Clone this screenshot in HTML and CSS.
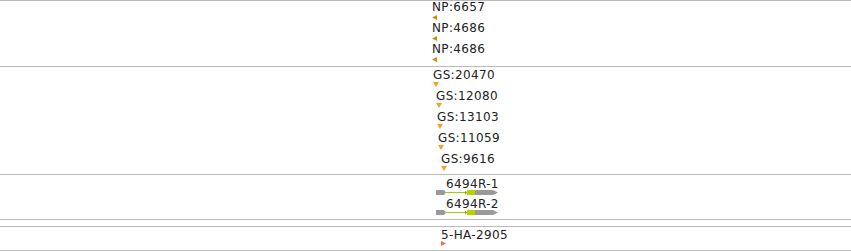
FILE: index.html
```html
<!DOCTYPE html>
<html>
<head>
<title>Tracks</title>
<meta charset="UTF-8">
<link rel="stylesheet" href="styles.css">
</head>
<body>

<!-- NP track -->
<div class="track np">
  <div class="feat" style="margin-left:432px">
    <div class="label">NP:6657</div>
    <svg class="tri" width="5" height="5"><polygon points="0,2.5 5,0 5,5"/></svg>
  </div>
  <div class="feat" style="margin-left:432px">
    <div class="label">NP:4686</div>
    <svg class="tri" width="5" height="5"><polygon points="0,2.5 5,0 5,5"/></svg>
  </div>
  <div class="feat" style="margin-left:432px">
    <div class="label">NP:4686</div>
    <svg class="tri" width="5" height="5"><polygon points="0,2.5 5,0 5,5"/></svg>
  </div>
</div>

<!-- GS track -->
<div class="track gs">
  <div class="feat" style="margin-left:433px">
    <div class="label">GS:20470</div>
    <svg class="tri" width="6" height="5"><polygon points="0,0 6,0 3,5"/></svg>
  </div>
  <div class="feat" style="margin-left:436px">
    <div class="label">GS:12080</div>
    <svg class="tri" width="6" height="5"><polygon points="0,0 6,0 3,5"/></svg>
  </div>
  <div class="feat" style="margin-left:437px">
    <div class="label">GS:13103</div>
    <svg class="tri" width="6" height="5"><polygon points="0,0 6,0 3,5"/></svg>
  </div>
  <div class="feat" style="margin-left:438px">
    <div class="label">GS:11059</div>
    <svg class="tri" width="6" height="5"><polygon points="0,0 6,0 3,5"/></svg>
  </div>
  <div class="feat" style="margin-left:441px">
    <div class="label">GS:9616</div>
    <svg class="tri" width="6" height="5"><polygon points="0,0 6,0 3,5"/></svg>
  </div>
</div>

<!-- gene models -->
<div class="track genes">
  <div class="feat" style="margin-left:436px">
    <div class="label">6494R-1</div>
    <svg class="gene" width="62" height="5">
      <polygon class="utr" points="0,0 8,0 10,2.5 8,5 0,5"/>
      <rect class="intron" x="10" y="2" width="19" height="1"/>
      <polygon class="start" points="29,0.5 31,2.5 29,4.5"/>
      <rect class="cds" x="31" y="0" width="8" height="5"/>
      <polygon class="utr" points="39,0 57,0 62,2.5 57,5 39,5"/>
    </svg>
  </div>
  <div class="feat" style="margin-left:436px">
    <div class="label">6494R-2</div>
    <svg class="gene" width="62" height="5">
      <polygon class="utr" points="0,0 8,0 10,2.5 8,5 0,5"/>
      <rect class="intron" x="10" y="2" width="19" height="1"/>
      <polygon class="start" points="29,0.5 31,2.5 29,4.5"/>
      <rect class="cds" x="31" y="0" width="8" height="5"/>
      <polygon class="utr" points="39,0 57,0 62,2.5 57,5 39,5"/>
    </svg>
  </div>
</div>

<!-- HA track -->
<div class="track ha">
  <div class="feat" style="margin-left:441px">
    <div class="label">5-HA-2905</div>
    <svg class="tri" width="5" height="5"><polygon points="0,0 5,2.5 0,5"/></svg>
  </div>
</div>

</body>
</html>
```

FILE: styles.css
```css
* {
  box-sizing: content-box;
}

body {
  margin: 0;
  font-family: "DejaVu Sans", Verdana, sans-serif;
  font-size: 12px;
  color: #222;
  background: #fff;
}

/* each track is a horizontal band with a grey rule on top */
.track {
  border-top: 1px solid #bbb;
}

.feat {
  display: flex;
  flex-direction: column;
  align-items: flex-start;
}

.label {
  line-height: 12px;
  letter-spacing: 0.35px;
  white-space: nowrap;
}

.tri {
  display: block;
}

/* NP track */
.np {
  height: 65px;
}
.np .tri {
  margin: 2px 0 2px 0;
  fill: #c8900a;
}

/* GS track */
.gs {
  height: 105px;
  padding-top: 2px;
}
.gs .tri {
  margin: 1px 0 3px 0;
  fill: #f2a32a;
}

/* genes */
.genes {
  height: 41px;
  padding-top: 3px;
  border-bottom: 1px solid #bbb;
}
.genes .label {
  margin-left: 10px;
}
.gene {
  display: block;
  margin-bottom: 3px;
}
.utr {
  fill: #9a9a9a;
}
.intron {
  fill: #a8c800;
}
.start {
  fill: #8a9a00;
}
.cds {
  fill: #bcd000;
}

/* HA track */
.ha {
  margin-top: 6px;
  height: 21px;
  padding-top: 2px;
  border-bottom: 1px solid #bbb;
}
.ha .tri {
  fill: #f26a55;
}
```
